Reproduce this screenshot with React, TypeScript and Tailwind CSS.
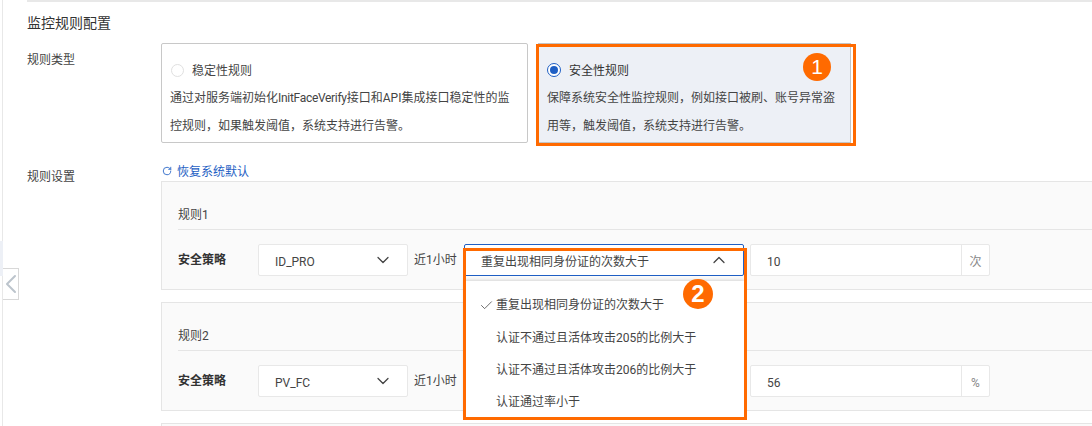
import { Check, ChevronDown, ChevronLeft, ChevronUp, RotateCw } from "lucide-react";

const font = { fontFamily: 'Roboto, "Noto Sans CJK SC", "Noto Sans", sans-serif' };

function Select({ value, up, className }: { value?: string; up?: boolean; className: string }) {
  return (
    <div className={`flex h-8 items-center justify-between rounded-[2px] bg-white pr-[14px] text-[12px] text-[#444] ${className}`}>
      <span className="pt-[3px]">{value}</span>
      {up ? (
        <ChevronUp className="h-[20px] w-[20px] text-[#444]" strokeWidth={1.5} />
      ) : (
        <ChevronDown className="h-[20px] w-[20px] text-[#444]" strokeWidth={1.5} />
      )}
    </div>
  );
}

function Rule({ name, strategy, metric, value, unit, className }: { name: string; strategy: string; metric?: string; value: string; unit: string; className: string }) {
  return (
    <section className={`w-[1000px] border border-[#e5e5e5] bg-[#fafafa] pl-4 ${className}`}>
      <div className="flex h-[48px] items-center border-b border-[#e5e5e5] pt-[18px] text-[12px] text-[#444]">{name}</div>
      <div className="mt-[14px] flex h-8 items-center text-[12px]">
        <span className="w-[80px] font-bold text-[#333]">安全策略</span>
        <Select value={strategy} className="w-[150px] border border-[#e8e8e8] pl-4" />
        <span className="ml-[6px] w-[50px] text-[#444]">近1小时</span>
        <Select value={metric} up className="w-[280px] border border-[#1f5fc4] pl-4" />
        <div className="ml-[6px] flex h-8 w-[240px] items-center rounded-[2px] border border-[#e8e8e8] bg-white">
          <span className="flex-1 pl-4 pt-[3px] text-[#444]">{value}</span>
          <span className="flex h-full w-[28px] items-center justify-center border-l border-[#e8e8e8] pt-[3px] text-[#888]">{unit}</span>
        </div>
      </div>
    </section>
  );
}

export default function App() {
  return (
    <div className="relative flex h-[426px] w-[1092px] overflow-hidden bg-white" style={font}>
      <aside className="h-full w-[3px] shrink-0 border-r border-[#e8e8e8]" />
      <main className="ml-[24px] flex-1 border-t-2 border-[#e8e8e8]">
        <h2 className="flex h-[41px] items-center pt-[1px] text-[14px] font-normal text-[#333]">监控规则配置</h2>
        <div className="flex">
          <div className="w-[134px] pt-[8px] text-[12px] leading-[18px] text-[#444]">规则类型</div>
          <div className="flex gap-[10px]">
            <div className="h-[100px] w-[367px] rounded-[2px] border border-[#c8c8c8] bg-white pl-2 pt-[12px] text-[12px] text-[#444]">
              <div className="flex h-[28px] items-center">
                <span className="ml-[1px] h-[13px] w-[13px] rounded-full border border-[#e0e0e0] bg-white" />
                <span className="ml-[8px] pt-[1px] text-[#444]">稳定性规则</span>
              </div>
              <p className="w-[350px] leading-[28px]">
                通过对服务端初始化<span className="tracking-[-0.3px]">InitFaceVerify</span>接口和API集成接口稳定性的监控规则，如果触发阈值，系统支持进行告警。
              </p>
            </div>
            <div className="h-[100px] w-[313px] border-b border-r border-t border-[#c4c4c4] bg-[#edf0f6] pl-[9px] pt-[12px] text-[12px] text-[#444]">
              <div className="flex h-[28px] items-center">
                <span className="flex h-[14px] w-[14px] items-center justify-center rounded-full border border-[#1f5fc4] bg-white">
                  <span className="h-2 w-2 rounded-full bg-[#1f5fc4]" />
                </span>
                <span className="ml-[8px] pt-[1px] text-[#333]">安全性规则</span>
              </div>
              <p className="w-[295px] leading-[28px]">保障系统安全性监控规则，例如接口被刷、账号异常盗用等，触发阈值，系统支持进行告警。</p>
            </div>
          </div>
        </div>
        <div className="mt-[18px] flex">
          <div className="w-[134px] pt-[7px] text-[12px] leading-[18px] text-[#444]">规则设置</div>
          <div>
            <div className="flex h-[20px] items-center text-[12px] text-[#1f5fc4]">
              <RotateCw className="ml-[1px] h-[10px] w-[10px]" strokeWidth={2} />
              <span className="ml-[5px] pt-[1px]">恢复系统默认</span>
            </div>
            <Rule name="规则1" strategy="ID_PRO" metric="重复出现相同身份证的次数大于" value="10" unit="次" className="h-[109px]" />
            <Rule name="规则2" strategy="PV_FC" value="56" unit="%" className="mt-3 h-[109px]" />
            <section className="mt-3 h-[60px] w-[1000px] border border-[#e5e5e5] bg-[#fafafa]" />
          </div>
        </div>
      </main>

      {/* collapse tab */}
      <div className="absolute left-[3px] top-[268px] flex h-8 w-4 items-center justify-center overflow-hidden border border-l-0 border-[#d8d8d8] bg-white">
        <ChevronLeft className="h-8 w-8 shrink-0 text-[#bcc4cc]" strokeWidth={1.5} />
      </div>
      <div className="absolute left-0 top-[241px] h-[35px] w-[3px] bg-[#edf0f6]" />

      {/* open dropdown */}
      <ul className="absolute left-[464px] top-[281px] h-[136px] w-[280px] bg-white pt-[8px] text-[12px] text-[#444] shadow-[0_-1px_3px_rgba(0,0,0,0.15)]">
        <li className="flex h-[32px] items-center pl-[15px]">
          <Check className="mr-[2px] h-[15px] w-[15px] text-[#444]" strokeWidth={1.25} />
          重复出现相同身份证的次数大于
        </li>
        <li className="flex h-[32px] items-center pl-[32px] pt-[2px]">认证不通过且活体攻击205的比例大于</li>
        <li className="flex h-[32px] items-center pl-[32px] pt-[2px]">认证不通过且活体攻击206的比例大于</li>
        <li className="flex h-[32px] items-center pl-[32px] pt-[2px]">认证通过率小于</li>
      </ul>

      {/* annotations */}
      <div className="pointer-events-none absolute left-[536px] top-[44px] h-[102px] w-[320px] border-[3px] border-[#ff6a00]" />
      <div className="pointer-events-none absolute left-[463px] top-[248px] h-[172px] w-[284px] border-[3px] border-[#ff6a00]" />
      <div className="absolute left-[803px] top-[53px] flex h-[28px] w-[28px] items-center justify-center rounded-full bg-[#ff6a00] text-[21px] text-white" style={{ fontFamily: '"Liberation Sans", sans-serif' }}>1</div>
      <div className="absolute left-[683px] top-[279px] flex h-[30px] w-[30px] items-center justify-center rounded-full bg-[#ff6a00] text-[24px] font-bold text-white" style={{ fontFamily: '"Liberation Sans", sans-serif' }}>2</div>
    </div>
  );
}
